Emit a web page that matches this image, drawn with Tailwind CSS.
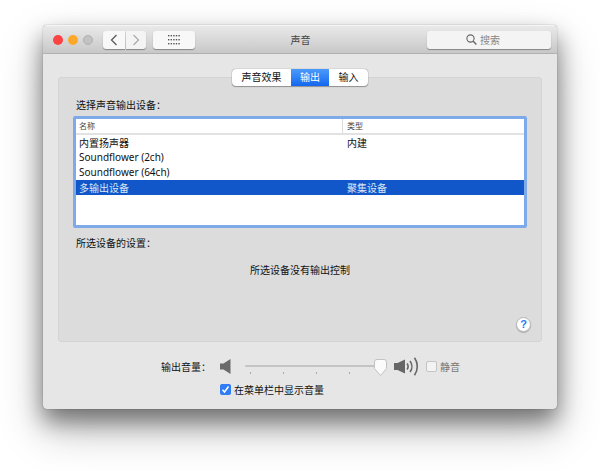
<!DOCTYPE html>
<html lang="zh-CN">
<head>
<meta charset="UTF-8">
<title>声音</title>
<script src="https://cdn.jsdelivr.net/npm/@tailwindcss/browser@4"></script>
</head>
<body class="bg-white overflow-hidden font-['Noto_Sans_CJK_SC','Liberation_Sans',sans-serif] text-[10px] text-[#111]">
<div class="w-[600px] h-[471px] pt-[25px] pl-[43px]">
  <!-- window -->
  <div class="w-[514px] h-[384px] flex flex-col rounded-[4px] bg-[#e6e6e6] shadow-[0_0_1px_rgba(0,0,0,0.6),0_12px_22px_rgba(0,0,0,0.42),0_20px_44px_rgba(0,0,0,0.28)] overflow-hidden">
    <!-- title bar -->
    <div class="h-[29px] shrink-0 flex items-center pl-[10px] pr-[6px] border-t border-b border-t-[#f4f4f4] border-b-[#b0b0b0] bg-gradient-to-b from-[#e9e9e9] to-[#c8c8c8]">
      <span class="w-[10px] h-[10px] rounded-full bg-[#fb4343]"></span>
      <span class="w-[10px] h-[10px] rounded-full bg-[#fca92b] ml-[5px]"></span>
      <span class="w-[10px] h-[10px] rounded-full bg-[#c2c2c2] border border-[#b0b0b0] ml-[5px]"></span>
      <div class="ml-[10px] flex h-[18px] gap-px">
        <div class="w-[22px] rounded-l-[3px] bg-[#f8f8f8] shadow-[0_1px_1px_rgba(0,0,0,0.35)] flex items-center justify-center">
          <svg width="8" height="12" viewBox="0 0 8 12" fill="none" stroke="#555" stroke-width="1.2"><path d="M6.5 1 1.5 6l5 5"/></svg>
        </div>
        <div class="w-[20px] rounded-r-[3px] bg-[#f4f4f4] shadow-[0_1px_1px_rgba(0,0,0,0.35)] flex items-center justify-center">
          <svg width="8" height="12" viewBox="0 0 8 12" fill="none" stroke="#aaa" stroke-width="1.2"><path d="M1.5 1l5 5-5 5"/></svg>
        </div>
      </div>
      <div class="ml-[7px] w-[42px] h-[18px] rounded-[3px] bg-[#f8f8f8] shadow-[0_1px_1px_rgba(0,0,0,0.35)] flex items-center justify-center">
        <svg width="12" height="10" viewBox="0 0 12 10" fill="#555">
          <rect x="0" y="0" width="1.4" height="1.4"/><rect x="2.6" y="0" width="1.4" height="1.4"/><rect x="5.2" y="0" width="1.4" height="1.4"/><rect x="7.8" y="0" width="1.4" height="1.4"/><rect x="10.4" y="0" width="1.4" height="1.4"/>
          <rect x="0" y="4" width="1.4" height="1.4"/><rect x="2.6" y="4" width="1.4" height="1.4"/><rect x="5.2" y="4" width="1.4" height="1.4"/><rect x="7.8" y="4" width="1.4" height="1.4"/><rect x="10.4" y="4" width="1.4" height="1.4"/>
          <rect x="0" y="8" width="1.4" height="1.4"/><rect x="2.6" y="8" width="1.4" height="1.4"/><rect x="5.2" y="8" width="1.4" height="1.4"/><rect x="7.8" y="8" width="1.4" height="1.4"/><rect x="10.4" y="8" width="1.4" height="1.4"/>
        </svg>
      </div>
      <div class="flex-1 text-center text-[#444] pr-[21px]">声音</div>
      <div class="w-[124px] h-[18px] pr-[12px] rounded-[3px] bg-[#f4f4f4] shadow-[0_1px_1px_rgba(0,0,0,0.35)] flex items-center justify-center gap-[3px] text-[#888]">
        <svg width="11" height="11" viewBox="0 0 11 11" fill="none" stroke="#666" stroke-width="1.1"><circle cx="4.5" cy="4.5" r="3.6"/><path d="M7.2 7.2 10.4 10.4" stroke-width="1.4"/></svg>
        <span>搜索</span>
      </div>
    </div>

    <!-- content -->
    <div class="flex-1 flex flex-col px-[15px] pt-[23px]">
      <div class="relative h-[265px] shrink-0 rounded-[3px] bg-[#dcdcdc] border border-[#d4d4d4] px-[17px] pt-[20px]">
        <!-- tabs -->
        <div class="absolute -top-[9px] left-[173px] flex h-[17px] rounded-[4px] bg-white shadow-[0_0_1px_rgba(0,0,0,0.6),0_1px_1px_rgba(0,0,0,0.3)] overflow-hidden leading-[16px]">
          <div class="w-[59px] text-center">声音效果</div>
          <div class="w-[38px] text-center text-white bg-gradient-to-b from-[#4b9bfb] to-[#1366ef]">输出</div>
          <div class="w-[39px] text-center">输入</div>
        </div>
        <div class="leading-[14px]">选择声音输出设备：</div>
        <!-- device table -->
        <div class="mt-[4px] h-[112px] -mx-[3px] rounded-[2px] border-[3px] border-[#7eaaea] bg-white flex flex-col overflow-hidden">
          <div class="h-[16px] shrink-0 flex border-b-2 border-[#e2e2e2] text-[8px] text-[#444] leading-[14px]">
            <div class="w-[267px] pl-[3px] border-r border-[#dcdcdc]">名称</div>
            <div class="pl-[4px]">类型</div>
          </div>
          <div class="h-[15px] flex leading-[15px]"><div class="w-[267px] pl-[3px]">内置扬声器</div><div class="pl-[4px]">内建</div></div>
          <div class="h-[15px] flex leading-[15px] font-['Noto_Sans',sans-serif]"><div class="w-[267px] pl-[3px]">Soundflower (2ch)</div></div>
          <div class="h-[15px] flex leading-[15px] font-['Noto_Sans',sans-serif]"><div class="w-[267px] pl-[3px]">Soundflower (64ch)</div></div>
          <div class="h-[15px] flex leading-[15px] bg-[#1257c9] text-[#dde6f5]"><div class="w-[267px] pl-[3px]">多输出设备</div><div class="pl-[4px]">聚集设备</div></div>
        </div>
        <div class="mt-[8px] leading-[14px]">所选设备的设置：</div>
        <div class="mt-[13px] text-center leading-[14px]">所选设备没有输出控制</div>
        <!-- help -->
        <div class="absolute right-[10px] bottom-[9px] w-[15px] h-[15px] rounded-full bg-white border border-[#b5b5b5] shadow-[0_1px_1px_rgba(0,0,0,0.2)] flex items-center justify-center text-[11px] font-bold text-[#2a7bf0] font-['Liberation_Sans',sans-serif] leading-none">?</div>
      </div>

      <!-- volume row -->
      <div class="mt-[14px] h-[20px] flex items-center pl-[103px]">
        <div class="w-[59px] whitespace-nowrap">输出音量：</div>
        <svg class="shrink-0" width="11" height="15" viewBox="0 0 11 15" fill="#6a6a6a"><path d="M0 4.5h3.5L10.5 0v15L3.5 10.5H0z"/></svg>
        <div class="relative ml-[14px] w-[136px] h-[20px] shrink-0">
          <div class="absolute left-0 right-0 top-[9px] h-[2px] rounded-full bg-[#c4c4c4]"></div>
          <div class="absolute left-[5px] top-[16px] flex gap-[32px]">
            <span class="w-px h-[2px] bg-[#aaa]"></span>
            <span class="w-px h-[2px] bg-[#aaa]"></span>
            <span class="w-px h-[2px] bg-[#aaa]"></span>
            <span class="w-px h-[2px] bg-[#aaa]"></span>
          </div>
          <svg class="absolute left-[129px] top-[3px]" width="13" height="17" viewBox="0 0 13 17"><path d="M3 .5h7A2.500 2.500 0 0 1 12.500 3v6.500L6.500 16.500.5 9.500V3A2.500 2.500 0 0 1 3 .5z" fill="#fbfbfb" stroke="#c2c2c2"/></svg>
        </div>
        <svg class="shrink-0 ml-[13px]" width="25" height="19" viewBox="0 0 25 19" fill="none" stroke="#666" stroke-width="1.6">
          <path d="M0 6h3.500L11 2.500v14L3.500 13H0z" fill="#666" stroke="none"/>
          <path d="M13 6.500a5 5 0 0 1 0 6"/>
          <path d="M16 4a9 9 0 0 1 0 11"/>
          <path d="M20.500 .8a15 15 0 0 1 0 17.400"/>
        </svg>
        <span class="shrink-0 ml-[7px] w-[11px] h-[11px] rounded-[2px] bg-[#f3f3f3] border border-[#c4c4c4]"></span>
        <span class="ml-[3px] text-[#777]">静音</span>
      </div>
      <!-- menu bar checkbox -->
      <div class="mt-[7px] h-[12px] flex items-center pl-[162px]">
        <span class="shrink-0 w-[11px] h-[11px] rounded-[2px] bg-[#2f7cf6] flex items-center justify-center">
          <svg width="9" height="9" viewBox="0 0 9 9" fill="none" stroke="#fff" stroke-width="1.500"><path d="M1.500 4.800 3.500 7 7.500 1.500"/></svg>
        </span>
        <span class="ml-[3px] whitespace-nowrap">在菜单栏中显示音量</span>
      </div>
    </div>
  </div>
</div>
</body>
</html>
